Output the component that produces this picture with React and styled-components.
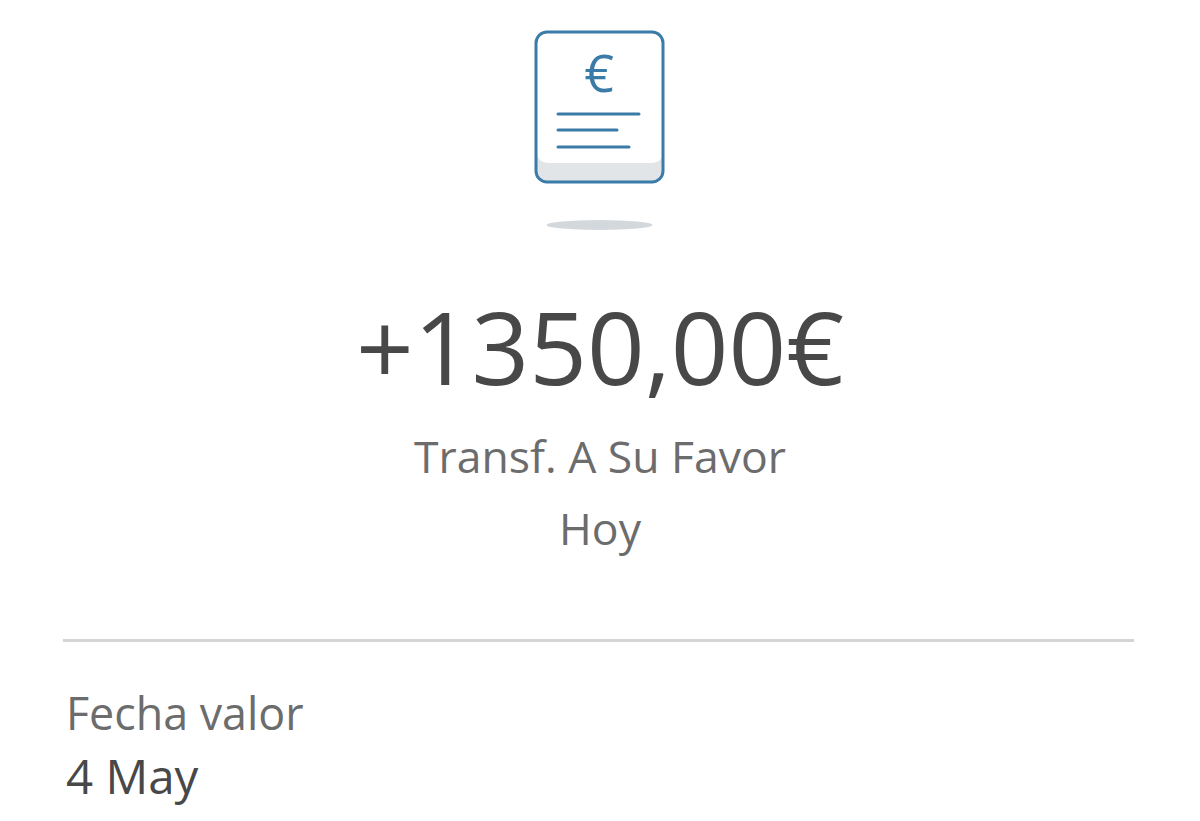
import React from "react";
import styled, { createGlobalStyle } from "styled-components";

const GlobalStyle = createGlobalStyle`
  html, body {
    margin: 0;
    background: #fff;
    overflow: hidden;
  }
  body {
    font-family: "Open Sans", "Liberation Sans", sans-serif;
  }
`;

const Page = styled.div`
  height: 821px;
  padding-top: 30px;
  box-sizing: border-box;
  overflow: hidden;
`;

const Summary = styled.section`
  display: flex;
  flex-direction: column;
  align-items: center;
`;

const Icon = styled.svg`
  display: block;
  width: 132px;
  height: 202px;
`;

const Amount = styled.div`
  margin-top: 47px;
  margin-bottom: 7px;
  font-size: 101px;
  font-weight: 400;
  line-height: 134px;
  color: #484848;
`;

const SubLine = styled.div`
  font-size: 44.5px;
  font-weight: 400;
  line-height: 72px;
  color: #6c6c6c;
`;

const Divider = styled.hr`
  margin: 75px 66px 0 63px;
  border: 0;
  height: 3px;
  background: #d4d4d6;
`;

const Detail = styled.div`
  padding: 40px 0 0 66px;
`;

const DetailLabel = styled.div`
  font-size: 44.8px;
  font-weight: 400;
  line-height: 62px;
  color: #6c6c6c;
`;

const DetailValue = styled.div`
  font-size: 47.5px;
  font-weight: 400;
  line-height: 64px;
  color: #484848;
`;

const DocumentIcon = () => (
  <Icon viewBox="0 0 132 202" fill="none">
    <path d="M3 122 Q3 133 16 133 H116 Q129 133 129 122 V140 Q129 152 116 152 H16 Q3 152 3 140 Z" fill="#e1e5e8" />
    <rect x="2" y="2" width="127" height="150" rx="11" stroke="#3b7ba8" strokeWidth="3" />
    <text x="65" y="62" textAnchor="middle" fontFamily="'Open Sans', sans-serif" fontWeight="500" fontSize="52" fill="#3b7ba8">€</text>
    <g stroke="#3b7ba8" strokeWidth="3" strokeLinecap="round">
      <line x1="24" y1="84" x2="105" y2="84" />
      <line x1="24" y1="100" x2="83" y2="100" />
      <line x1="24" y1="117" x2="95" y2="117" />
    </g>
    <ellipse cx="65.5" cy="195" rx="53" ry="5" fill="#d3d8dd" />
  </Icon>
);

export default function App() {
  return (
    <Page>
      <GlobalStyle />
      <Summary>
        <DocumentIcon />
        <Amount>+1350,00€</Amount>
        <SubLine>Transf. A Su Favor</SubLine>
        <SubLine>Hoy</SubLine>
      </Summary>
      <Divider />
      <Detail>
        <DetailLabel>Fecha valor</DetailLabel>
        <DetailValue>4 May</DetailValue>
      </Detail>
    </Page>
  );
}
